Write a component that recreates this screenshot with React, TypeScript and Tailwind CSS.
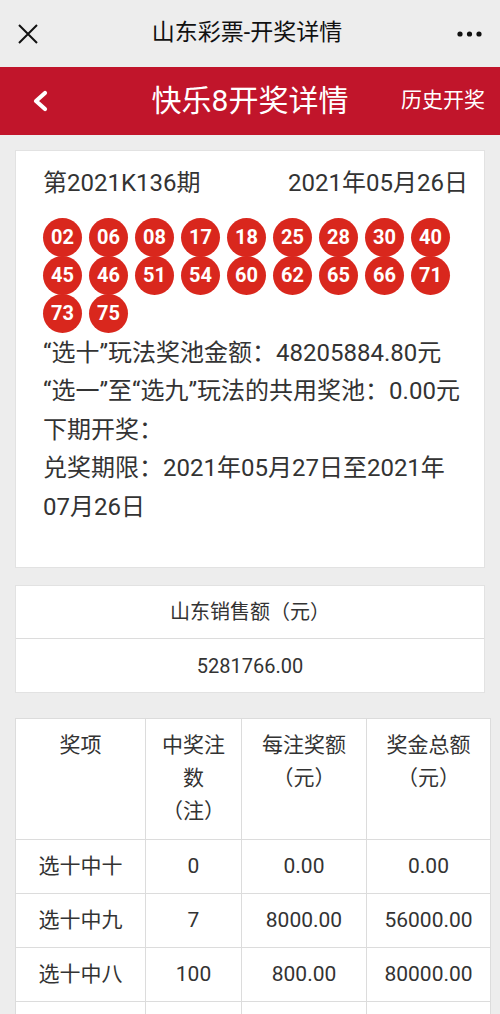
const balls = [
  "02", "06", "08", "17", "18", "25", "28", "30", "40",
  "45", "46", "51", "54", "60", "62", "65", "66", "71",
  "73", "75",
];

const prizeRows = [
  { name: "选十中十", count: "0", each: "0.00", total: "0.00" },
  { name: "选十中九", count: "7", each: "8000.00", total: "56000.00" },
  { name: "选十中八", count: "100", each: "800.00", total: "80000.00" },
];

const font = { fontFamily: 'Roboto, "Noto Sans CJK SC", sans-serif' };

function TopBar() {
  return (
    <div className="flex h-[67px] items-center justify-between bg-[#ededed] px-[18px]">
      <svg width="20" height="20" viewBox="0 0 20 20" className="text-[#111]">
        <path d="M1 1 19 19M19 1 1 19" stroke="currentColor" strokeWidth="2" />
      </svg>
      <span className="text-[23px] text-[#111]">山东彩票-开奖详情</span>
      <svg width="28" height="8" viewBox="0 0 28 8" className="mr-[-2px] text-[#111]">
        <circle cx="4" cy="4" r="2.6" fill="currentColor" />
        <circle cx="13.5" cy="4" r="2.6" fill="currentColor" />
        <circle cx="23" cy="4" r="2.6" fill="currentColor" />
      </svg>
    </div>
  );
}

function RedBar() {
  return (
    <div className="grid h-[68px] grid-cols-[1fr_auto_1fr] items-center bg-[#c1152b] text-white">
      <div className="pl-[32px]">
        <svg width="16" height="22" viewBox="0 0 16 22">
          <path
            d="M13 3 4 11l9 8"
            fill="none"
            stroke="white"
            strokeWidth="4.2"
            strokeLinecap="round"
            strokeLinejoin="round"
          />
        </svg>
      </div>
      <span className="text-[30px] leading-none">快乐8开奖详情</span>
      <span className="justify-self-end pr-[15px] text-[21px]">历史开奖</span>
    </div>
  );
}

function DrawCard() {
  return (
    <div className="mx-[15px] mt-[15px] border border-[#e2e2e2] bg-white pb-[41px] pl-[27px] pr-[16px] pt-[13px] text-[24px] leading-[38.5px] text-[#333]">
      <div className="flex justify-between">
        <span>第2021K136期</span>
        <span>2021年05月26日</span>
      </div>
      <div className="mt-[15px] grid auto-rows-[38px] grid-cols-[repeat(9,39px)] gap-x-[7px]">
        {balls.map((n) => (
          <div
            key={n}
            className="flex h-[39px] w-[39px] items-center justify-center rounded-full bg-[#d9271d] text-[20px] font-bold leading-none text-white"
          >
            {n}
          </div>
        ))}
      </div>
      <div className="mt-[2px]">
        <p>“选十”玩法奖池金额：48205884.80元</p>
        <p>“选一”至“选九”玩法的共用奖池：0.00元</p>
        <p>下期开奖：</p>
        <p>兑奖期限：2021年05月27日至2021年07月26日</p>
      </div>
    </div>
  );
}

function SalesCard() {
  return (
    <div className="mx-[15px] mt-[17px] border border-[#e2e2e2] bg-white text-center text-[20px] text-[#333]">
      <div className="flex h-[53px] items-center justify-center border-b border-[#dcdcdc]">
        山东销售额（元）
      </div>
      <div className="flex h-[53px] items-center justify-center">5281766.00</div>
    </div>
  );
}

function PrizeTable() {
  return (
    <table className="ml-[15px] mt-[25px] w-[475px] table-fixed border-collapse bg-white text-center text-[21px] text-[#333]">
      <colgroup>
        <col className="w-[130px]" />
        <col className="w-[96px]" />
        <col className="w-[125px]" />
        <col className="w-[124px]" />
      </colgroup>
      <thead>
        <tr className="h-[121px] align-top leading-[33px]">
          <th className="border border-[#dcdcdc] pt-[10px] font-normal">奖项</th>
          <th className="border border-[#dcdcdc] px-[14px] pt-[10px] font-normal">中奖注数（注）</th>
          <th className="border border-[#dcdcdc] px-[18px] pt-[10px] font-normal">每注奖额（元）</th>
          <th className="border border-[#dcdcdc] px-[18px] pt-[10px] font-normal">奖金总额（元）</th>
        </tr>
      </thead>
      <tbody>
        {prizeRows.map((r) => (
          <tr key={r.name} className="h-[54px]">
            <td className="border border-[#dcdcdc]">{r.name}</td>
            <td className="border border-[#dcdcdc]">{r.count}</td>
            <td className="border border-[#dcdcdc]">{r.each}</td>
            <td className="border border-[#dcdcdc]">{r.total}</td>
          </tr>
        ))}
        <tr className="h-[54px]">
          <td className="border border-[#dcdcdc]" />
          <td className="border border-[#dcdcdc]" />
          <td className="border border-[#dcdcdc]" />
          <td className="border border-[#dcdcdc]" />
        </tr>
      </tbody>
    </table>
  );
}

export default function App() {
  return (
    <div className="min-h-[1014px] w-[500px] bg-[#ededed] pb-[40px]" style={font}>
      <TopBar />
      <RedBar />
      <DrawCard />
      <SalesCard />
      <PrizeTable />
    </div>
  );
}
